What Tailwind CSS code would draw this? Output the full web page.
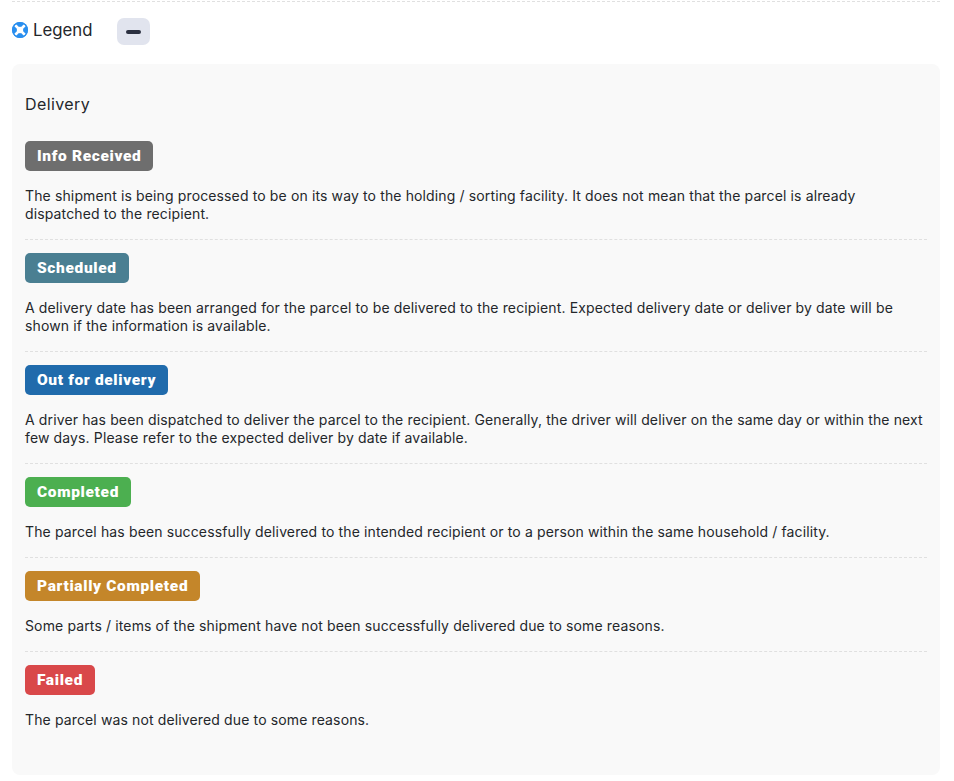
<!DOCTYPE html>
<html lang="en">
<head>
    <meta charset="UTF-8">
    <title>Legend</title>
    <script src="https://cdn.jsdelivr.net/npm/@tailwindcss/browser@4"></script>
</head>
<body class="bg-white font-['Inter',sans-serif] text-[#24272b]">
    <div class="h-[781px] overflow-hidden pl-3 pr-[14px]">
        <div class="mt-px border-t border-dashed border-[#e0e0e0]"></div>

        <div class="flex items-start pt-4 pb-[19px]">
            <svg class="w-4 h-4 mt-1" viewBox="0 0 16 16">
                <circle cx="8" cy="8" r="8" fill="#2a8fef"/>
                <path d="M3 3l10 10M13 3L3 13" stroke="#fff" stroke-width="2.6"/>
                <circle cx="8" cy="8" r="3.2" fill="#fff"/>
                <circle cx="8" cy="8" r="7.4" fill="none" stroke="#2a8fef" stroke-width="1.2"/>
            </svg>
            <span class="ml-[5px] w-[59px] text-[16.8px] leading-6 whitespace-nowrap">Legend</span>
            <button class="ml-[25px] w-[33px] h-[27px] rounded-[7px] bg-[#e1e4ee] flex items-center justify-center">
                <span class="block w-[15px] h-[4px] rounded-full bg-[#2b3040]"></span>
            </button>
        </div>

        <div class="h-[711px] rounded-lg bg-[#f9f9f9] px-[13px] pt-[28px] text-[14px] leading-[18px] tracking-[0.13px]">
            <h3 class="text-[16px] leading-6 mb-[25px] tracking-[0.4px]">Delivery</h3>

            <div class="pb-4 mb-[13px] border-b border-dashed border-[#e0e0e0]">
                <span class="inline-block h-[30px] px-3 rounded-[5px] bg-[#6e6e6e] font-['Roboto',sans-serif] font-black text-[15.5px] leading-[31px] tracking-[0.65px] text-white align-top">Info Received</span>
                <p class="mt-4">The shipment is being processed to be on its way to the holding / sorting facility. It does not mean that the parcel is already dispatched to the recipient.</p>
            </div>

            <div class="pb-4 mb-[13px] border-b border-dashed border-[#e0e0e0]">
                <span class="inline-block h-[30px] px-3 rounded-[5px] bg-[#4a7f92] font-['Roboto',sans-serif] font-black text-[15.5px] leading-[31px] tracking-[0.65px] text-white align-top">Scheduled</span>
                <p class="mt-4">A delivery date has been arranged for the parcel to be delivered to the recipient. Expected delivery date or deliver by date will be shown if the information is available.</p>
            </div>

            <div class="pb-4 mb-[13px] border-b border-dashed border-[#e0e0e0]">
                <span class="inline-block h-[30px] px-3 rounded-[5px] bg-[#206bac] font-['Roboto',sans-serif] font-black text-[15.5px] leading-[31px] tracking-[0.65px] text-white align-top">Out for delivery</span>
                <p class="mt-4">A driver has been dispatched to deliver the parcel to the recipient. Generally, the driver will deliver on the same day or within the next few days. Please refer to the expected deliver by date if available.</p>
            </div>

            <div class="pb-4 mb-[13px] border-b border-dashed border-[#e0e0e0]">
                <span class="inline-block h-[30px] px-3 rounded-[5px] bg-[#4caf50] font-['Roboto',sans-serif] font-black text-[15.5px] leading-[31px] tracking-[0.65px] text-white align-top">Completed</span>
                <p class="mt-4">The parcel has been successfully delivered to the intended recipient or to a person within the same household / facility.</p>
            </div>

            <div class="pb-4 mb-[13px] border-b border-dashed border-[#e0e0e0]">
                <span class="inline-block h-[30px] px-3 rounded-[5px] bg-[#c4862a] font-['Roboto',sans-serif] font-black text-[15.5px] leading-[31px] tracking-[0.65px] text-white align-top">Partially Completed</span>
                <p class="mt-4">Some parts / items of the shipment have not been successfully delivered due to some reasons.</p>
            </div>

            <div>
                <span class="inline-block h-[30px] px-3 rounded-[5px] bg-[#d9484a] font-['Roboto',sans-serif] font-black text-[15.5px] leading-[31px] tracking-[0.65px] text-white align-top">Failed</span>
                <p class="mt-4">The parcel was not delivered due to some reasons.</p>
            </div>
        </div>
    </div>
</body>
</html>
